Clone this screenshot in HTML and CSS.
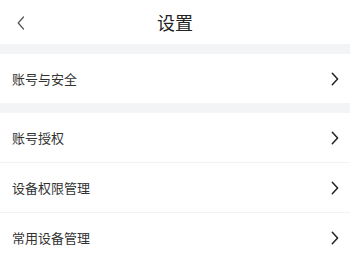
FILE: index.html
```html
<!DOCTYPE html>
<html lang="zh">
<head>
<meta charset="utf-8">
<link rel="stylesheet" href="styles.css">
</head>
<body>
<div class="page">
  <header class="nav">
    <span class="back">
      <svg width="8" height="14" viewBox="0 0 8 14"><path d="M6.5 1 L1.2 7 L6.5 13" fill="none" stroke="#555" stroke-width="1.2" stroke-linecap="round" stroke-linejoin="round"/></svg>
    </span>
    <h1 class="title">设置</h1>
  </header>
  <div class="gap"></div>
  <div class="group">
    <div class="row"><span class="label">账号与安全</span><svg class="chev" width="8" height="14" viewBox="0 0 8 14"><path d="M1.3 1.2 L6.6 7 L1.3 12.8" fill="none" stroke="#222" stroke-width="1.5" stroke-linecap="round" stroke-linejoin="round"/></svg></div>
  </div>
  <div class="gap"></div>
  <div class="group">
    <div class="row"><span class="label">账号授权</span><svg class="chev" width="8" height="14" viewBox="0 0 8 14"><path d="M1.3 1.2 L6.6 7 L1.3 12.8" fill="none" stroke="#222" stroke-width="1.5" stroke-linecap="round" stroke-linejoin="round"/></svg></div>
    <div class="row"><span class="label">设备权限管理</span><svg class="chev" width="8" height="14" viewBox="0 0 8 14"><path d="M1.3 1.2 L6.6 7 L1.3 12.8" fill="none" stroke="#222" stroke-width="1.5" stroke-linecap="round" stroke-linejoin="round"/></svg></div>
    <div class="row"><span class="label">常用设备管理</span><svg class="chev" width="8" height="14" viewBox="0 0 8 14"><path d="M1.3 1.2 L6.6 7 L1.3 12.8" fill="none" stroke="#222" stroke-width="1.5" stroke-linecap="round" stroke-linejoin="round"/></svg></div>
  </div>
</div>
</body>
</html>
```
FILE: styles.css
```css
html, body {
  margin: 0;
  padding: 0;
  background: #ffffff;
}
body {
  font-family: "Noto Sans CJK SC", "Noto Sans", sans-serif;
  color: #333333;
}
.page {
  width: 350px;
  height: 262px;
  overflow: hidden;
  display: flex;
  flex-direction: column;
}
.nav {
  height: 45px;
  display: flex;
  align-items: center;
  justify-content: center;
  position: relative;
}
.back {
  position: absolute;
  left: 17px;
  top: 16px;
  display: flex;
}
.title {
  margin: 0;
  font-size: 18px;
  font-weight: 400;
  color: #222222;
  line-height: 1;
  padding-bottom: 1px;
}
.gap {
  height: 10px;
  background: #f2f4f5;
  flex: none;
}
.group {
  display: flex;
  flex-direction: column;
}
.row {
  height: 49px;
  flex: none;
  display: flex;
  align-items: center;
  justify-content: space-between;
  padding: 0 11px 0 12px;
  border-bottom: 1px solid #f2f3f3;
}
.row:last-child {
  border-bottom: none;
}
.label {
  font-size: 13px;
  line-height: 1;
  color: #333333;
  padding-bottom: 1px;
}
.chev {
  display: block;
}
```
